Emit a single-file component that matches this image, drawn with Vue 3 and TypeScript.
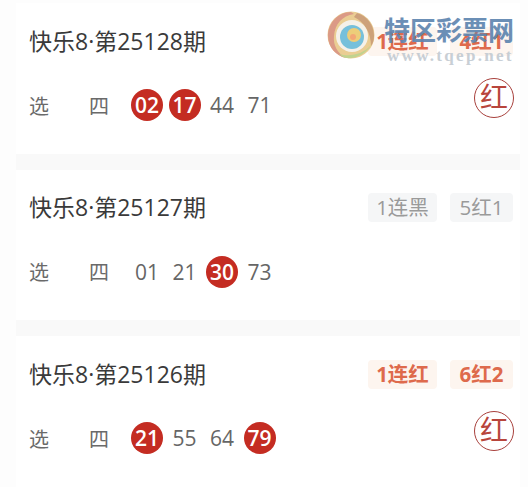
<script setup lang="ts">
interface Ball { n: string; hit: boolean }
interface Card { title: string; tags: string[]; hot: boolean; balls: Ball[] }
const b = (n: string, hit = false): Ball => ({ n, hit })
const cards: Card[] = [
  { title: '快乐8·第25128期', tags: ['1连红', '4红1'], hot: true, balls: [b('02', true), b('17', true), b('44'), b('71')] },
  { title: '快乐8·第25127期', tags: ['1连黑', '5红1'], hot: false, balls: [b('01'), b('21'), b('30', true), b('73')] },
  { title: '快乐8·第25126期', tags: ['1连红', '6红2'], hot: true, balls: [b('21', true), b('55'), b('64'), b('79', true)] },
]
</script>

<template>
  <div class="page">
    <section v-for="c in cards" :key="c.title" class="card">
      <div class="top">
        <h2 class="title">{{ c.title }}</h2>
        <div class="tags">
          <span v-for="t in c.tags" :key="t" class="tag" :class="{ red: c.hot }">{{ t }}</span>
        </div>
      </div>
      <div class="row">
        <span class="lab">选</span>
        <span class="lab four">四</span>
        <div class="balls">
          <span v-for="x in c.balls" :key="x.n" class="ball" :class="{ hit: x.hit }">{{ x.n }}</span>
        </div>
        <span v-if="c.hot" class="stamp">红</span>
      </div>
    </section>
    <div class="mark">
      <svg class="swirl" width="48" height="52" viewBox="0 0 48 52">
        <circle cx="24" cy="26" r="23.5" fill="#e9c98a" />
        <path d="M24 3C11 3 1 14 1 27c0 11 8 20 18 22C10 44 6 36 7 27 8 15 15 7 27 5Z" fill="#d9927c" />
        <path d="M45 35C39 45 29 50 19 49c-3-1-5-2-7-4 10 3 24 1 33-10Z" fill="#bcd086" />
        <path d="M30 4c11 3 17 13 17 23 0 4-1 7-3 10 0-12-6-24-17-29Z" fill="#c99a70" />
        <circle cx="25" cy="27" r="16" fill="#f5f0e8" />
        <circle cx="25" cy="28" r="12" fill="#6bbbd8" />
        <circle cx="27" cy="26" r="7" fill="#ecc96e" />
        <circle cx="26" cy="28" r="3" fill="#f3a06b" />
      </svg>
      <div class="marktext">
        <div class="cn">特区彩票网</div>
        <div class="url">www.tqep.net</div>
      </div>
    </div>
  </div>
</template>

<style>
html, body { margin: 0; background: #fdfdfd; }
</style>

<style scoped>
.page {
  position: relative;
  width: 528px;
  height: 487px;
  overflow: hidden;
  padding: 3px 8px 0 16px;
  box-sizing: border-box;
  display: flex;
  flex-direction: column;
  font-family: "Open Sans", "Noto Sans CJK SC", sans-serif;
}
.card {
  height: 166.5px;
  flex: none;
  background: #fff;
  border-bottom: 16px solid #f9f9f9;
  padding: 18.5px 7px 0 13px;
  box-sizing: border-box;
}
.top { display: flex; justify-content: space-between; align-items: center; height: 38px; }
.title { margin: 0; font-size: 23px; font-weight: 400; color: #3a3a3a; line-height: 38px; }
.tags { display: flex; gap: 13px; padding-top: 1px; }
.tag {
  min-width: 69px;
  box-sizing: border-box;
  height: 29px;
  padding: 0 8px;
  border-radius: 4px;
  background: #f5f6f7;
  color: #9a9a9a;
  font-size: 20.5px;
  line-height: 28px;
  text-align: center;
}
.tag + .tag { min-width: 63px; }
.tag.red { background: #fdf5ef; color: #de6a4c; font-weight: 700; }
.row { display: flex; align-items: center; margin-top: 23.5px; height: 44px; position: relative; }
.lab { font-size: 20px; color: #6a6a6a; width: 20px; }
.four { margin-left: 40px; }
.balls { display: flex; margin-left: 22px; gap: 5.5px; }
.ball {
  width: 32px;
  height: 32px;
  border-radius: 50%;
  text-align: center;
  line-height: 32px;
  font-size: 21px;
  color: #666;
}
.ball.hit { background: #c42c22; color: #fff; font-weight: 600; }
.stamp {
  position: absolute;
  right: -1px;
  top: -5px;
  width: 38px;
  height: 38px;
  border: 1px solid #a8403c;
  border-radius: 50%;
  color: #b8453c;
  font-size: 28px;
  line-height: 37px;
  text-align: center;
}
.mark {
  position: absolute;
  left: 327px;
  top: 9px;
  display: flex;
  gap: 9px;
  opacity: 0.92;
}
.marktext { padding-top: 5px; }
.cn {
  font-size: 26px;
  line-height: 32px;
  font-weight: 700;
  color: #5f86b0;
  white-space: nowrap;
}
.url {
  font-family: "Liberation Serif", serif;
  font-size: 17px;
  line-height: 16px;
  letter-spacing: 2.3px;
  font-weight: 700;
  color: #c4cbd2;
  white-space: nowrap;
  margin-left: 3px;
  margin-top: 2px;
}
</style>
